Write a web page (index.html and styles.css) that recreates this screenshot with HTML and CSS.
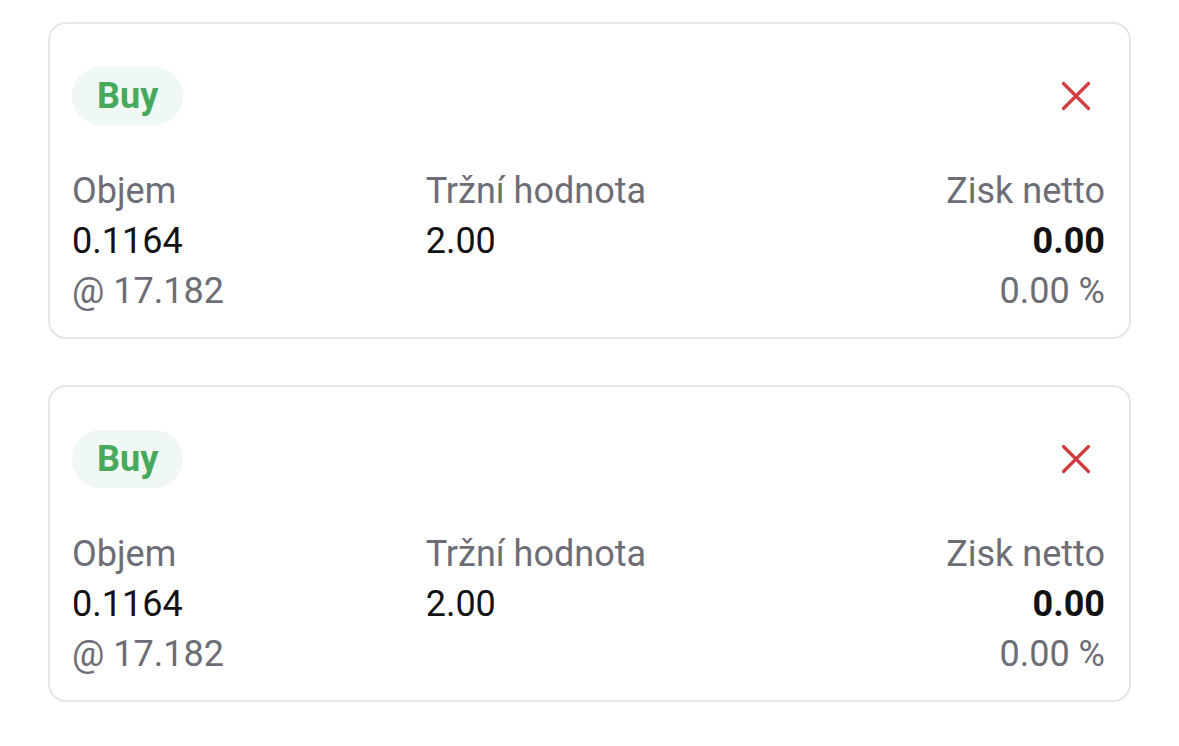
FILE: index.html
```html
<!DOCTYPE html>
<html lang="cs">
<head>
<meta charset="utf-8">
<link rel="stylesheet" href="styles.css">
</head>
<body>
<div class="list">
  <div class="card">
    <div class="head">
      <span class="badge">Buy</span>
      <button class="close" aria-label="Zavřít">
        <svg width="30" height="30" viewBox="0 0 30 30"><path d="M2.5 2.5 L27.5 27.5 M27.5 2.5 L2.5 27.5" stroke="#d13c40" stroke-width="3.2" stroke-linecap="round" fill="none"/></svg>
      </button>
    </div>
    <div class="grid">
      <div class="col">
        <div class="label">Objem</div>
        <div class="value">0.1164</div>
        <div class="label">@ 17.182</div>
      </div>
      <div class="col">
        <div class="label">Tržní hodnota</div>
        <div class="value">2.00</div>
      </div>
      <div class="col right">
        <div class="label">Zisk netto</div>
        <div class="value strong">0.00</div>
        <div class="label">0.00 %</div>
      </div>
    </div>
  </div>
  <div class="card">
    <div class="head">
      <span class="badge">Buy</span>
      <button class="close" aria-label="Zavřít">
        <svg width="30" height="30" viewBox="0 0 30 30"><path d="M2.5 2.5 L27.5 27.5 M27.5 2.5 L2.5 27.5" stroke="#d13c40" stroke-width="3.2" stroke-linecap="round" fill="none"/></svg>
      </button>
    </div>
    <div class="grid">
      <div class="col">
        <div class="label">Objem</div>
        <div class="value">0.1164</div>
        <div class="label">@ 17.182</div>
      </div>
      <div class="col">
        <div class="label">Tržní hodnota</div>
        <div class="value">2.00</div>
      </div>
      <div class="col right">
        <div class="label">Zisk netto</div>
        <div class="value strong">0.00</div>
        <div class="label">0.00 %</div>
      </div>
    </div>
  </div>
</div>
</body>
</html>
```
FILE: styles.css
```css
* { box-sizing: border-box; }
html, body { margin: 0; background: #fff; }
body {
  font-family: Roboto, "Noto Sans", sans-serif;
  padding: 22px 48px;
}
.list {
  display: flex;
  flex-direction: column;
  gap: 46px;
}
.card {
  border: 2px solid #e6e6ea;
  border-radius: 18px;
  padding: 43px 24px 21px 22px;
}
.head {
  display: flex;
  justify-content: space-between;
  align-items: center;
  height: 58px;
}
.badge {
  display: inline-flex;
  align-items: center;
  height: 58px;
  padding: 0 25px;
  border-radius: 29px;
  background: #eff8f2;
  color: #47a95e;
  font-weight: 700;
  font-size: 36px;
}
.close {
  width: 58px;
  height: 58px;
  border: 0;
  background: transparent;
  padding: 0;
  display: flex;
  align-items: center;
  justify-content: center;
}
.grid {
  margin-top: 41px;
  display: grid;
  grid-template-columns: 1fr 1fr 1fr;
  column-gap: 28px;
  font-size: 36px;
  line-height: 50px;
}
.right { text-align: right; }
.label { color: #6d6d75; }
.value { color: #121214; }
.strong { font-weight: 700; }
```
